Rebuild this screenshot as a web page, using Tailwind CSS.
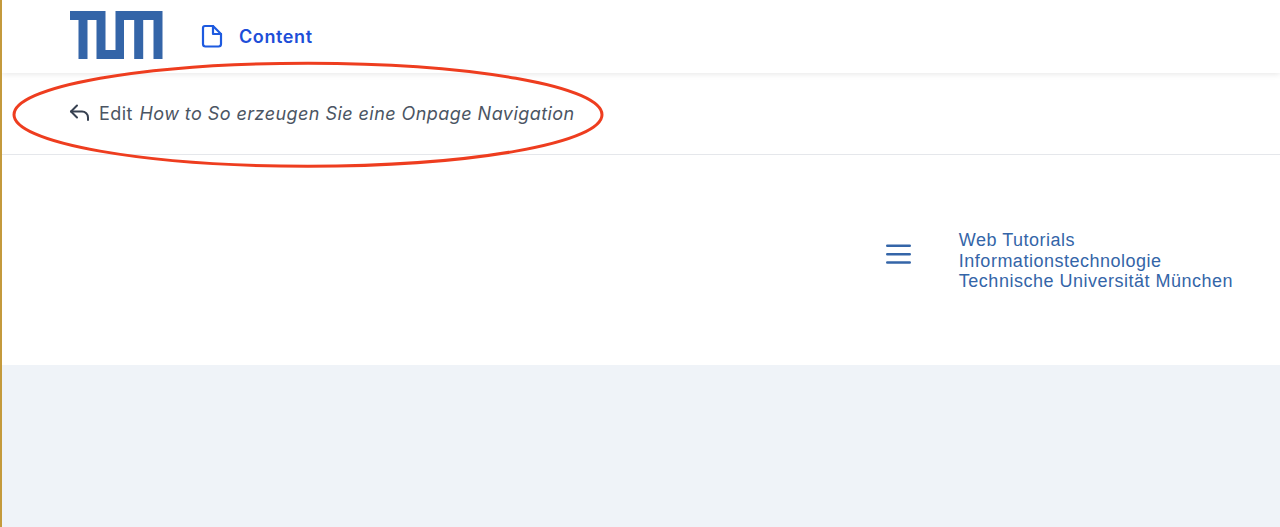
<!doctype html>
<html>
    <head>
        <meta charset="UTF-8" />
        <meta name="viewport" content="width=device-width, initial-scale=1.0" />
        <script src="https://cdn.jsdelivr.net/npm/@tailwindcss/browser@4"></script>
    </head>
    <body class="bg-[#eff3f8] min-h-screen m-0 font-[Inter,sans-serif]">
        <div class="relative h-[527px] overflow-hidden border-l-2 border-[#c49a3c]">
            <!-- Top nav -->
            <header class="relative z-10 h-[73px] bg-white flex items-center pl-[67.5px] shadow-[0_1px_6px_rgba(0,0,0,0.10)]">
                <svg class="w-[93px] h-[48px] -mt-[4px]" viewBox="0 0 93 48" fill="#3465a8" xmlns="http://www.w3.org/2000/svg">
                    <path d="M0 0H35.500V48H26.500V9H17.500V48H8.500V9H0Z M26.500 39H45.500V0H92.500V48H83.500V9H73.200V48H64.200V9H54V48H26.500Z"/>
                </svg>
                <a class="flex items-center ml-[38px] text-[#1d4ed8] font-semibold text-[18px] tracking-[0.6px]">
                    <svg class="w-[22px] h-[24px] -mt-[2px]" viewBox="0 0 22 24" fill="none" stroke="#1d5ae0" stroke-width="2.200" stroke-linejoin="round" stroke-linecap="round" xmlns="http://www.w3.org/2000/svg">
                        <path d="M4 2H12L20 10V20A2.500 2.500 0 0 1 17.500 22.500H4.500A2.500 2.500 0 0 1 2 20V4A2 2 0 0 1 4 2Z"/>
                        <path d="M12 2V10H20"/>
                    </svg>
                    <span class="ml-[16.500px]">Content</span>
                </a>
            </header>

            <!-- Edit bar -->
            <div class="h-[82px] bg-white border-b border-[#e5e7eb] flex items-center pl-[67px] text-[18px] text-[#4b5563] tracking-[0.445px]">
                <svg class="w-[22px] h-[22px] text-[#374151]" viewBox="0 0 22 22" fill="none" stroke="currentColor" stroke-width="2" stroke-linecap="round" stroke-linejoin="round" xmlns="http://www.w3.org/2000/svg">
                    <path d="M8 2.500L2 8.500L8 14.500"/>
                    <path d="M2 8.500H13A6 6 0 0 1 19 14.500V17"/>
                </svg>
                <span class="ml-[8px]">Edit <em class="ml-[1px]">How to So erzeugen Sie eine Onpage Navigation</em></span>
            </div>

            <!-- Site title block -->
            <div class="h-[210px] bg-white flex justify-end items-start pt-[75px] pr-[47px]">
                <div class="flex items-center gap-[48px] text-[#3465a8]">
                    <svg class="w-[25px] h-[20px] mb-[13px]" viewBox="0 0 25 20" fill="none" stroke="currentColor" stroke-width="2.500" stroke-linecap="round" xmlns="http://www.w3.org/2000/svg">
                        <path d="M1.250 1.800H23.750M1.250 10.200H23.750M1.250 18.500H23.750"/>
                    </svg>
                    <div class="font-['Liberation_Sans',sans-serif] text-[18px] leading-[20.500px] tracking-[0.5px]">
                        <div>Web Tutorials</div>
                        <div>Informationstechnologie</div>
                        <div>Technische Universität München</div>
                    </div>
                </div>
            </div>

            <!-- Annotation -->
            <svg class="absolute left-[-2px] top-0 z-20 pointer-events-none" width="1280" height="527" xmlns="http://www.w3.org/2000/svg">
                <ellipse cx="308" cy="114.700" rx="294" ry="51.500" fill="none" stroke="#ee3d1f" stroke-width="3"/>
            </svg>
        </div>
    </body>
</html>
